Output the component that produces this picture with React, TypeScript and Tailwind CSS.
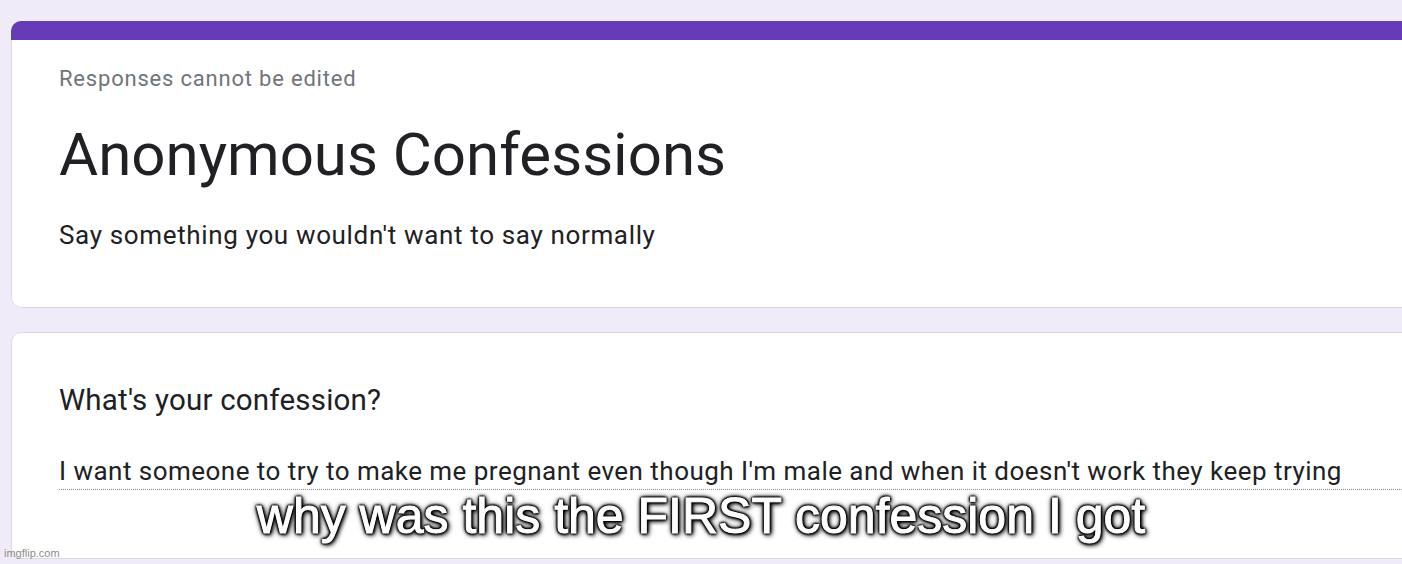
import React from "react";

export default function App() {
  return (
    <div className="relative h-[564px] w-[1402px] overflow-hidden bg-[#f0ebf8] font-['Roboto',sans-serif] text-[#202124]">
      <div className="flex flex-col gap-[24px] pl-[11px] pt-[21px]">
        {/* Header card */}
        <div className="w-[1420px] overflow-hidden rounded-[10px]">
          <div className="h-[19px] bg-[#673ab7]" />
          <div className="rounded-b-[10px] border-x border-b border-[#dadce0] bg-white pb-[57px] pl-[47px] pt-[27px]">
            <div className="text-[22px] leading-[24px] tracking-[0.8px] text-[#70757a]">Responses cannot be edited</div>
            <div className="mt-[28px] text-[60px] leading-[72px]">Anonymous Confessions</div>
            <div className="mt-[29px] text-[26px] leading-[30px] tracking-[0.65px]">Say something you wouldn't want to say normally</div>
          </div>
        </div>

        {/* Question card */}
        <div className="w-[1420px] rounded-[10px] border border-[#dadce0] bg-white pb-[68px] pl-[47px] pt-[49px]">
          <div className="text-[29.5px] leading-[36px] tracking-[0.2px]">What's your confession?</div>
          <div className="mt-[38px] border-b border-dotted border-[#8a8d91] pb-[3px] text-[26px] leading-[30px] tracking-[0.47px]">
            I want someone to try to make me pregnant even though I'm male and when it doesn't work they keep trying
          </div>
        </div>
      </div>

      {/* Meme caption */}
      <div className="absolute left-0 right-0 top-[491px] text-center font-['Liberation_Sans',Arial,sans-serif] text-[50px] leading-[50px] text-white [-webkit-text-stroke:1px_#fff] [text-shadow:1px_1px_2px_#000,-1px_-1px_2px_#000,1px_-1px_2px_#000,-1px_1px_2px_#000,0_0_3px_#000,0_0_4px_#000,0_0_6px_#000,2px_2px_5px_#000]">
        why was this the FIRST confession I got
      </div>

      {/* Watermark */}
      <div className="absolute left-[4px] top-[547px] font-['Liberation_Sans',Arial,sans-serif] text-[11px] leading-[13px] text-[#8c8c8c]">
        imgflip.com
      </div>
    </div>
  );
}
